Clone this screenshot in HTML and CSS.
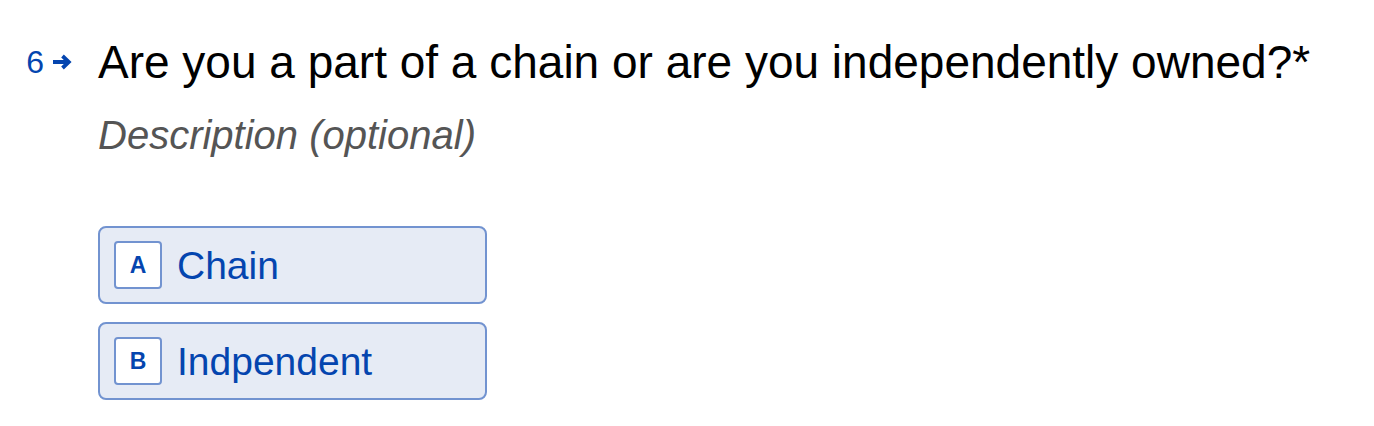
FILE: index.html
```html
<!DOCTYPE html>
<html>
<head>
<meta charset="utf-8">
<link rel="stylesheet" href="styles.css">
</head>
<body>
<div class="question">
  <div class="prefix">
    <span class="num">6</span>
    <svg class="arrow" width="20" height="16" viewBox="0 0 20 16"><path d="M1 8h16M10.5 2L16.8 8L10.5 14" fill="none" stroke="#0445af" stroke-width="3.8"/></svg>
  </div>
  <div class="body">
    <h1 class="title">Are you a part of a chain or are you independently owned?*</h1>
    <p class="desc">Description (optional)</p>
    <div class="options">
      <div class="option"><span class="key">A</span><span class="label">Chain</span></div>
      <div class="option"><span class="key">B</span><span class="label">Indpendent</span></div>
    </div>
  </div>
</div>
</body>
</html>
```
FILE: styles.css
```css
html, body { margin: 0; padding: 0; background: #fff; }
body { font-family: "Liberation Sans", Arial, sans-serif; }
.question { display: flex; padding-top: 34px; }
.prefix { width: 98px; box-sizing: border-box; display: flex; justify-content: flex-end; align-items: center; gap: 8px; padding-right: 26px; height: 56px; color: #0445af; }
.num { font-size: 32px; line-height: 1; }
.arrow { display: block; }
.body { flex: none; }
.title { margin: 0; font-size: 46px; font-weight: 400; line-height: 56px; color: #000; }
.desc { margin: 22px 0 0; font-size: 40px; font-style: italic; line-height: 46px; color: #555; }
.options { margin-top: 68px; display: flex; flex-direction: column; gap: 18px; width: 389px; }
.option { box-sizing: border-box; height: 78px; display: flex; align-items: center; padding-left: 14px; gap: 15px; background: #e6ebf5; border: 2px solid #7293d0; border-radius: 8px; }
.key { box-sizing: border-box; width: 48px; height: 48px; display: flex; align-items: center; justify-content: center; background: #fff; border: 2px solid #7293d0; border-radius: 4px; color: #0445af; font-size: 23px; font-weight: 700; }
.label { color: #0445af; font-size: 39px; line-height: 1; }
```
